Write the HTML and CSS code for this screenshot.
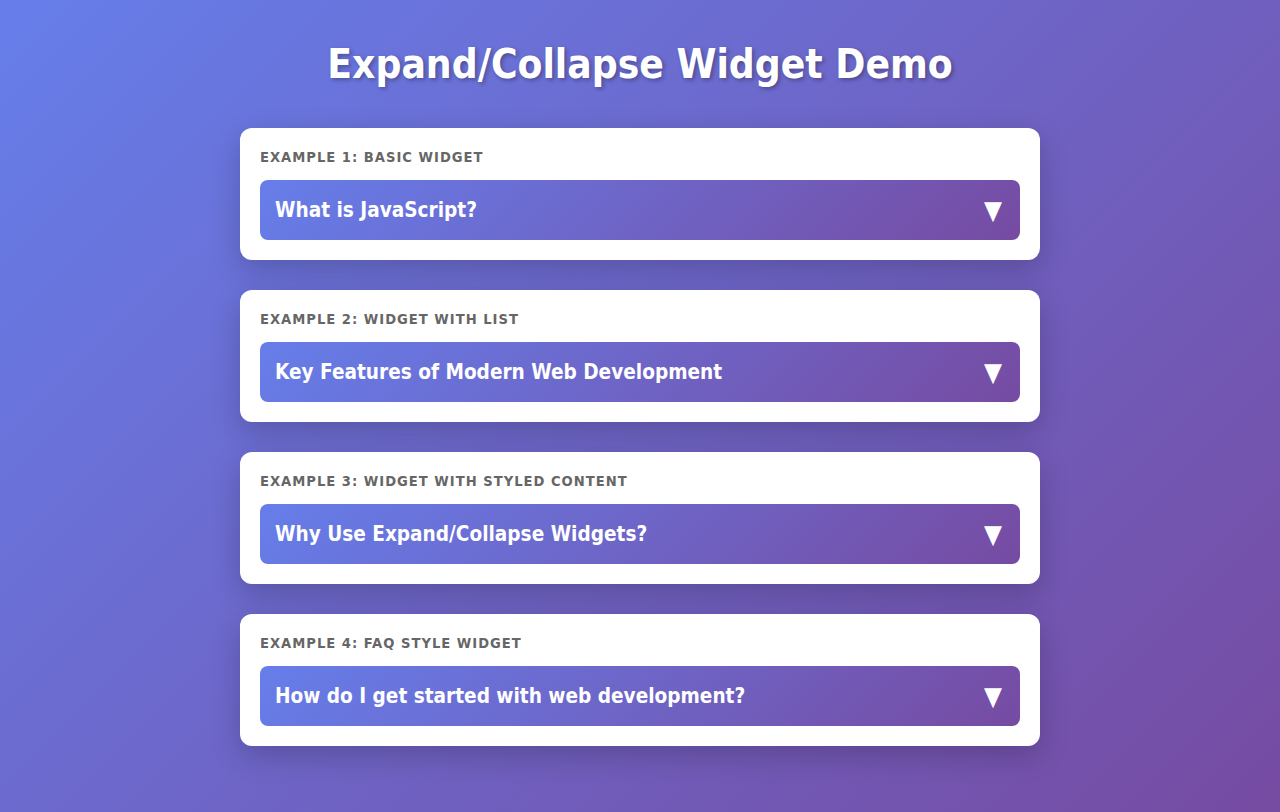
FILE: index.html
```html
<!DOCTYPE html>
<html>
<head>
<meta charset="utf-8">
<link rel="stylesheet" href="styles.css">
</head>
<body>
<div class="container">
  <h1 class="title">Expand/Collapse Widget Demo</h1>
  <div class="card">
    <div class="label">Example 1: Basic Widget</div>
    <div class="header"><span>What is JavaScript?</span><span class="arrow">▼</span></div>
  </div>
  <div class="card">
    <div class="label">Example 2: Widget with List</div>
    <div class="header"><span>Key Features of Modern Web Development</span><span class="arrow">▼</span></div>
  </div>
  <div class="card">
    <div class="label">Example 3: Widget with Styled Content</div>
    <div class="header"><span>Why Use Expand/Collapse Widgets?</span><span class="arrow">▼</span></div>
  </div>
  <div class="card">
    <div class="label">Example 4: FAQ Style Widget</div>
    <div class="header"><span>How do I get started with web development?</span><span class="arrow">▼</span></div>
  </div>
</div>
</body>
</html>
```
FILE: styles.css
```css
html, body { margin: 0; padding: 0; }
body {
  font-family: "DejaVu Sans Condensed", "DejaVu Sans", sans-serif;
  background: linear-gradient(135deg, #667eea 0%, #764ba2 100%);
  min-height: 812px;
  padding: 20px;
  box-sizing: border-box;
}
.container {
  width: 800px;
  margin: 0 auto;
  display: flex;
  flex-direction: column;
  gap: 30px;
}
.title {
  color: #fff;
  text-align: center;
  font-size: 40.3px;
  font-weight: bold;
  margin: 21px 0 10px;
  text-shadow: 2px 2px 4px rgba(0,0,0,0.3);
}
.card {
  background: #fff;
  border-radius: 12px;
  padding: 20px;
  box-shadow: 0 10px 30px rgba(0,0,0,0.2);
}
.label {
  font-size: 14.6px;
  font-weight: bold;
  color: #666;
  text-transform: uppercase;
  letter-spacing: 1px;
  margin-bottom: 15px;
  line-height: 17px;
}
.header {
  display: flex;
  justify-content: space-between;
  align-items: center;
  height: 60px;
  padding: 0 18px 0 15px;
  border-radius: 8px;
  background: linear-gradient(135deg, #667eea 0%, #764ba2 100%);
  color: #fff;
  font-size: 20.6px;
  font-weight: bold;
}
.arrow { font-size: 26px; line-height: 1; }
```
